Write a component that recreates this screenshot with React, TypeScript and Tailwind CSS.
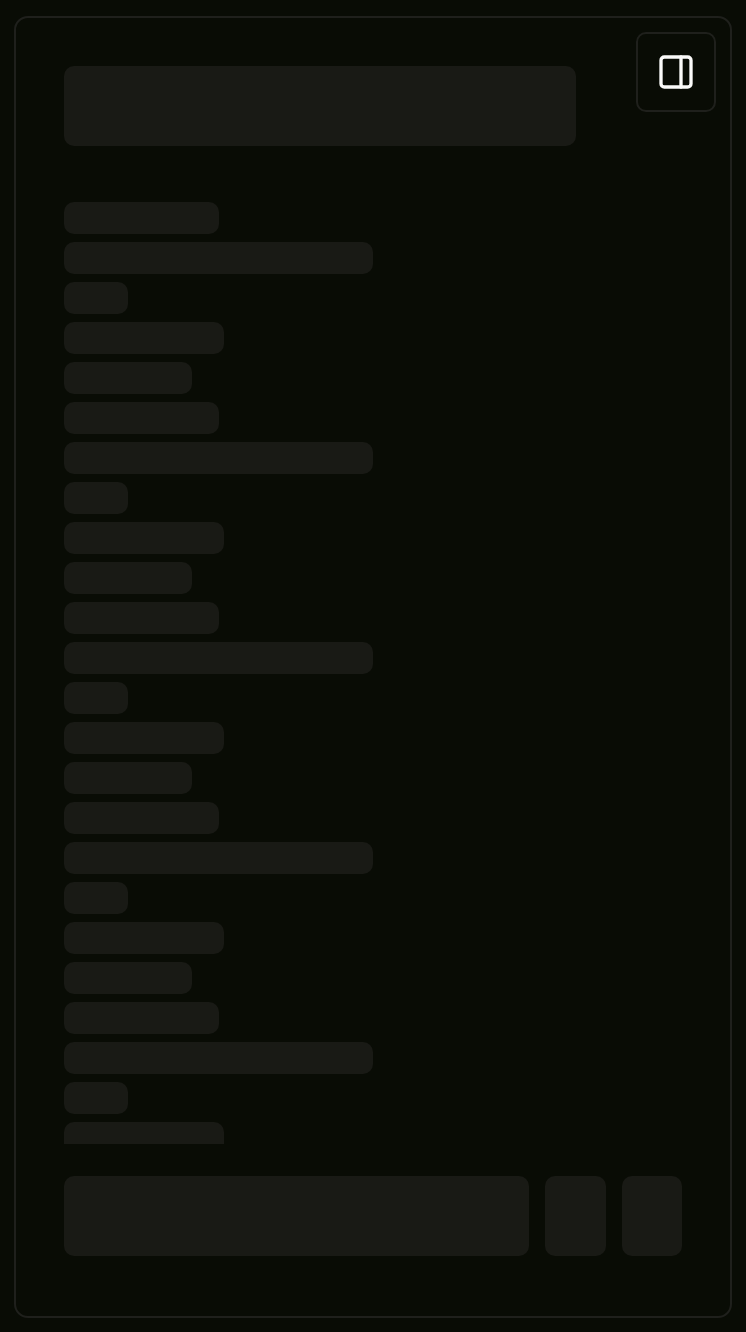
import { PanelRight } from "lucide-react";

const lineWidths = ["w-1/4", "w-1/2", "w-16", "w-40", "w-32"];
const lines = Array.from({ length: 60 }, (_, i) => lineWidths[i % lineWidths.length]);

function Skeleton({ className }: { className: string }) {
  return <div className={`rounded-[10px] bg-[#191a15] ${className}`} />;
}

export default function App() {
  return (
    <div className="h-screen bg-[#090c05] px-3.5 pt-4 pb-3.5">
      <main
        aria-busy="true"
        className="relative flex h-full flex-col rounded-[14px] border-2 border-[#1f201c] px-12 pt-12 pb-15"
      >
        <button
          type="button"
          aria-label="Toggle panel"
          className="absolute top-3.5 right-3.5 flex size-20 items-center justify-center rounded-[10px] border-2 border-[#1f201c] bg-[#090c05] text-[#fafaf9]"
        >
          <PanelRight size={40} aria-hidden="true" />
        </button>
        <Skeleton className="h-20 w-lg max-w-5/6 shrink-0" />
        <div className="mt-14 flex min-h-0 flex-1 flex-col gap-2 overflow-hidden">
          {lines.map((width, i) => (
            <Skeleton key={i} className={`h-8 shrink-0 ${width}`} />
          ))}
        </div>
        <div className="mt-8 flex shrink-0 gap-4">
          <Skeleton className="h-20 w-full" />
          <Skeleton className="h-20 w-20" />
          <Skeleton className="h-20 w-20" />
        </div>
      </main>
    </div>
  );
}
